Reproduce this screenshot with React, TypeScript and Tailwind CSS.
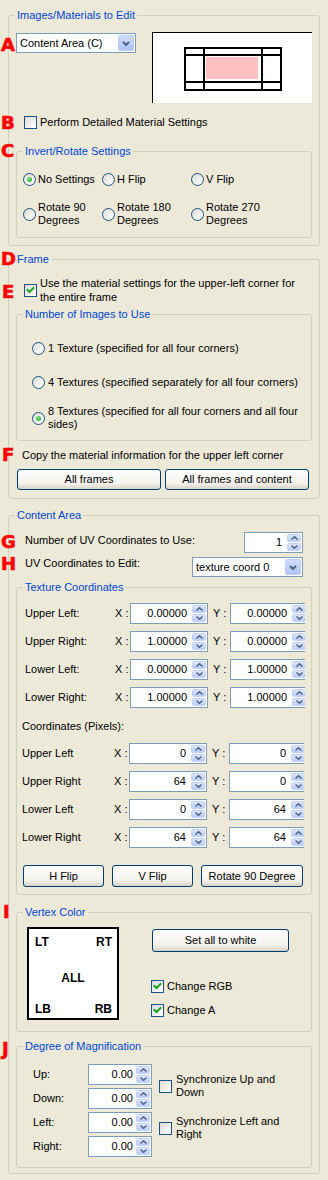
import React from "react";

function Group({ title, className = "", children }: { title: string; className?: string; children?: React.ReactNode }) {
  return (
    <fieldset className={`border border-[#D0D0BF] rounded-[3px] ${className}`}>
      <legend className="ml-[6px] px-[2px] text-[#0046D5] leading-[13px]">{title}</legend>
      {children}
    </fieldset>
  );
}

function Check({ checked = false }: { checked?: boolean }) {
  return (
    <span className="shrink-0 w-[13px] h-[13px] border border-[#1C5180] bg-[linear-gradient(135deg,#DCDCD7,#FFFFFF)] flex items-center justify-center">
      {checked && (
        <svg width="9" height="9" viewBox="0 0 9 9">
          <path d="M1.5 4 L3.5 6 L7.5 2" fill="none" stroke="#21A121" strokeWidth="2" strokeLinecap="square" />
        </svg>
      )}
    </span>
  );
}

function Radio({ checked = false }: { checked?: boolean }) {
  return (
    <span className="shrink-0 w-[13px] h-[13px] rounded-full border border-[#1C5180] bg-[linear-gradient(135deg,#DCDCD7,#FFFFFF)] flex items-center justify-center">
      {checked && <span className="w-[5px] h-[5px] rounded-full bg-[radial-gradient(circle_at_35%_35%,#7BE37B,#21A121)]" />}
    </span>
  );
}

function Arrow({ up }: { up: boolean }) {
  return (
    <svg width="7" height="4" viewBox="0 0 7 4">
      <path d={up ? "M0.5 3.5 L3.5 0.7 L6.5 3.5" : "M0.5 0.5 L3.5 3.3 L6.5 0.5"} fill="none" stroke="#4D6185" strokeWidth="1.4" />
    </svg>
  );
}

function SpinBtns() {
  return (
    <span className="flex flex-col w-[15px] shrink-0 self-stretch py-[1px] pr-[1px] gap-[1px]">
      <span className="flex-1 flex items-center justify-center rounded-[2px] bg-[linear-gradient(#DCE6FD,#BACCF6)] border border-[#C3D3F8]">
        <Arrow up />
      </span>
      <span className="flex-1 flex items-center justify-center rounded-[2px] bg-[linear-gradient(#DCE6FD,#BACCF6)] border border-[#C3D3F8]">
        <Arrow up={false} />
      </span>
    </span>
  );
}

function Spin({ value, className = "", pr = "pr-[4px]" }: { value: string; className?: string; pr?: string }) {
  return (
    <div className={`flex shrink-0 bg-white border border-[#7F9DB9] ${className}`}>
      <span className={`flex-1 flex items-center justify-end ${pr}`}>{value}</span>
      <SpinBtns />
    </div>
  );
}

function Combo({ text, className = "" }: { text: string; className?: string }) {
  return (
    <div className={`flex shrink-0 bg-white border border-[#7F9DB9] ${className}`}>
      <span className="flex-1 pl-[3px] flex items-center whitespace-nowrap">{text}</span>
      <span className="w-[16px] my-[1px] mr-[1px] rounded-[2px] bg-[linear-gradient(#CFDCFD,#AFC4F4)] border border-[#BCCDF7] flex items-center justify-center">
        <svg width="8" height="5" viewBox="0 0 8 5">
          <path d="M1 1 L4 4 L7 1" fill="none" stroke="#4D6185" strokeWidth="2" />
        </svg>
      </span>
    </div>
  );
}

function Btn({ children, className = "" }: { children: React.ReactNode; className?: string }) {
  return (
    <div className={`flex items-center justify-center shrink-0 rounded-[3px] border border-[#003C74] bg-[linear-gradient(#FFFFFF,#F3F2EC_70%,#D8D2C6)] whitespace-nowrap ${className}`}>
      {children}
    </div>
  );
}

function CoordRow({ label, x, y, pl, labelW }: { label: string; x: string; y: string; pl: string; labelW: string }) {
  return (
    <div className={`flex items-center h-[21px] ${pl}`}>
      <span className={`shrink-0 ${labelW}`}>{label}</span>
      <span className="shrink-0 w-[15px]">X :</span>
      <Spin value={x} className="w-[78px] h-[21px]" pr="pr-[5px]" />
      <span className="shrink-0 ml-[5px] w-[17px]">Y :</span>
      <div className="w-[75px] h-[21px] overflow-hidden shrink-0">
        <Spin value={y} className="w-[78px] h-[21px]" pr="pr-[5px]" />
      </div>
    </div>
  );
}

const RL = "absolute font-['DejaVu_Sans',sans-serif] font-bold text-[18px] leading-[18px] text-[#FF0000] [-webkit-text-stroke:0.6px_#FF0000]";

export default function App() {
  const tex = [
    ["Upper Left:", "0.00000", "0.00000"],
    ["Upper Right:", "1.00000", "0.00000"],
    ["Lower Left:", "0.00000", "1.00000"],
    ["Lower Right:", "1.00000", "1.00000"],
  ];
  const pix = [
    ["Upper Left", "0", "0"],
    ["Upper Right", "64", "0"],
    ["Lower Left", "0", "64"],
    ["Lower Right", "64", "64"],
  ];
  return (
    <div className="relative w-[328px] h-[1180px] bg-[#ECE9D8] text-[11px] leading-[13px] text-black font-['Liberation_Sans',Arial,sans-serif] pt-[9px] overflow-hidden">
      <Group title="Images/Materials to Edit" className="ml-[8px] w-[312px]">
        <div className="pb-[7px]">
          <div className="flex items-start mt-[10px]">
            <Combo text="Content Area (C)" className="ml-[7px] mt-[1px] w-[120px] h-[20px]" />
            <div className="ml-[16px] w-[160px] h-[71px] bg-white border-t border-l border-black">
              <svg width="159" height="70" viewBox="0 0 159 70">
                <rect x="53" y="24" width="52" height="22" fill="#FFC0C0" />
                <rect x="31" y="14" width="98" height="2" fill="#000" />
                <rect x="31" y="21" width="98" height="2" fill="#000" />
                <rect x="31" y="48" width="98" height="2" fill="#000" />
                <rect x="31" y="56" width="98" height="2" fill="#000" />
                <rect x="31" y="14" width="2" height="44" fill="#000" />
                <rect x="50" y="14" width="2" height="44" fill="#000" />
                <rect x="108" y="14" width="2" height="44" fill="#000" />
                <rect x="127" y="14" width="2" height="44" fill="#000" />
              </svg>
            </div>
          </div>
          <div className="flex items-center mt-[13px] ml-[15px] h-[13px]">
            <Check />
            <span className="ml-[3px]">Perform Detailed Material Settings</span>
          </div>
          <Group title="Invert/Rotate Settings" className="ml-[7px] mt-[16px] w-[296px]">
            <div className="pb-[10px] pl-[6px]">
              <div className="flex mt-[15px] h-[13px]">
                <div className="flex items-center w-[79px]"><Radio checked /><span className="ml-[2px]">No Settings</span></div>
                <div className="flex items-center w-[89px]"><Radio /><span className="ml-[2px]">H Flip</span></div>
                <div className="flex items-center"><Radio /><span className="ml-[2px]">V Flip</span></div>
              </div>
              <div className="flex mt-[15px] h-[26px]">
                <div className="flex items-center w-[79px]"><Radio /><span className="ml-[2px]">Rotate 90<br />Degrees</span></div>
                <div className="flex items-center w-[89px]"><Radio /><span className="ml-[2px]">Rotate 180<br />Degrees</span></div>
                <div className="flex items-center"><Radio /><span className="ml-[2px]">Rotate 270<br />Degrees</span></div>
              </div>
            </div>
          </Group>
        </div>
      </Group>

      <Group title="Frame" className="ml-[8px] mt-[7px] w-[312px]">
        <div className="pb-[8px]">
          <div className="flex items-center mt-[10px] ml-[15px]">
            <Check checked />
            <span className="ml-[3px] leading-[14px] whitespace-nowrap">
              Use the material settings for the upper-left corner for<br />the entire frame
            </span>
          </div>
          <Group title="Number of Images to Use" className="ml-[7px] mt-[4px] w-[296px]">
            <div className="pb-[9px] pl-[15px]">
              <div className="flex items-center mt-[21px] h-[13px]"><Radio /><span className="ml-[3px] whitespace-nowrap">1 Texture (specified for all four corners)</span></div>
              <div className="flex items-center mt-[21px] h-[13px]"><Radio /><span className="ml-[3px] whitespace-nowrap">4 Textures (specified separately for all four corners)</span></div>
              <div className="flex items-center mt-[16px]"><Radio checked /><span className="ml-[3px] whitespace-nowrap">8 Textures (specified for all four corners and all four<br />sides)</span></div>
            </div>
          </Group>
          <div className="mt-[8px] ml-[13px] whitespace-nowrap">Copy the material information for the upper left corner</div>
          <div className="flex mt-[7px] ml-[8px] gap-[4px]">
            <Btn className="w-[144px] h-[21px]">All frames</Btn>
            <Btn className="w-[144px] h-[21px]">All frames and content</Btn>
          </div>
        </div>
      </Group>

      <Group title="Content Area" className="ml-[8px] mt-[10px] w-[312px]">
        <div className="pb-[5px]">
          <div className="flex items-start mt-[10px] pl-[16px] pr-[16px]">
            <span className="mt-[2px]">Number of UV Coordinates to Use:</span>
            <Spin value="1" className="ml-auto w-[59px] h-[21px]" pr="pr-[5px]" />
          </div>
          <div className="flex items-start mt-[4px] pl-[16px] pr-[16px]">
            <span>UV Coordinates to Edit:</span>
            <Combo text="texture coord 0" className="ml-auto w-[111px] h-[20px]" />
          </div>

          <Group title="Texture Coordinates" className="ml-[7px] mt-[4px] w-[296px]">
            <div className="pb-[7px]">
              <div className="flex flex-col gap-[7px] mt-[9px]">
                {tex.map((r) => (
                  <CoordRow key={r[0]} label={r[0]} x={r[1]} y={r[2]} pl="pl-[8px]" labelW="w-[90px]" />
                ))}
              </div>
              <div className="mt-[12px] pl-[5px]">Coordinates (Pixels):</div>
              <div className="flex flex-col gap-[7px] mt-[10px]">
                {pix.map((r) => (
                  <CoordRow key={r[0]} label={r[0]} x={r[1]} y={r[2]} pl="pl-[5px]" labelW="w-[92px]" />
                ))}
              </div>
              <div className="flex mt-[17px] pl-[6px]">
                <Btn className="w-[81px] h-[22px]">H Flip</Btn>
                <Btn className="w-[81px] h-[22px] ml-[8px]">V Flip</Btn>
                <Btn className="w-[102px] h-[22px] ml-[8px]">Rotate 90 Degree</Btn>
              </div>
            </div>
          </Group>

          <Group title="Vertex Color" className="ml-[7px] mt-[11px] w-[296px]">
            <div className="flex items-start pb-[11px]">
              <div className="ml-[10px] mt-[8px] w-[92px] h-[93px] border-2 border-black bg-white font-bold text-[12px] leading-[14px] flex flex-col shrink-0">
                <div className="flex justify-between mt-[6px] pl-[6px] pr-[5px]"><span>LT</span><span>RT</span></div>
                <div className="mt-[22px] text-center">ALL</div>
                <div className="flex justify-between mt-[17px] pl-[6px] pr-[5px]"><span>LB</span><span>RB</span></div>
              </div>
              <div className="ml-[33px] mt-[10px] flex flex-col">
                <Btn className="w-[137px] h-[23px]">Set all to white</Btn>
                <div className="flex items-center mt-[28px] -ml-[1px] h-[13px]"><Check checked /><span className="ml-[3px]">Change RGB</span></div>
                <div className="flex items-center mt-[11px] -ml-[1px] h-[13px]"><Check checked /><span className="ml-[3px]">Change A</span></div>
              </div>
            </div>
          </Group>

          <Group title="Degree of Magnification" className="ml-[7px] mt-[8px] w-[296px]">
            <div className="flex items-start pb-[10px]">
              <div className="flex flex-col gap-[3px] mt-[11px] pl-[16px]">
                {["Up:", "Down:", "Left:", "Right:"].map((l) => (
                  <div key={l} className="flex items-center h-[21px]">
                    <span className="w-[55px] shrink-0">{l}</span>
                    <Spin value="0.00" className="w-[64px] h-[21px]" pr="pr-[3px]" />
                  </div>
                ))}
              </div>
              <div className="ml-[7px] flex flex-col">
                <div className="flex items-center mt-[20px]"><Check /><span className="ml-[4px] whitespace-nowrap">Synchronize Up and<br />Down</span></div>
                <div className="flex items-center mt-[16px]"><Check /><span className="ml-[4px] whitespace-nowrap">Synchronize Left and<br />Right</span></div>
              </div>
            </div>
          </Group>
        </div>
      </Group>

      <span className={`${RL} left-[1px] top-[36px]`}>A</span>
      <span className={`${RL} left-[1px] top-[114px]`}>B</span>
      <span className={`${RL} left-[1px] top-[142px]`}>C</span>
      <span className={`${RL} left-[1px] top-[250px]`}>D</span>
      <span className={`${RL} left-[2px] top-[283px]`}>E</span>
      <span className={`${RL} left-[2px] top-[446px]`}>F</span>
      <span className={`${RL} left-[1px] top-[533px]`}>G</span>
      <span className={`${RL} left-[1px] top-[555px]`}>H</span>
      <span className={`${RL} left-[3px] top-[903px]`}>I</span>
      <span className={`${RL} left-[2px] top-[1040px]`}>J</span>
    </div>
  );
}
